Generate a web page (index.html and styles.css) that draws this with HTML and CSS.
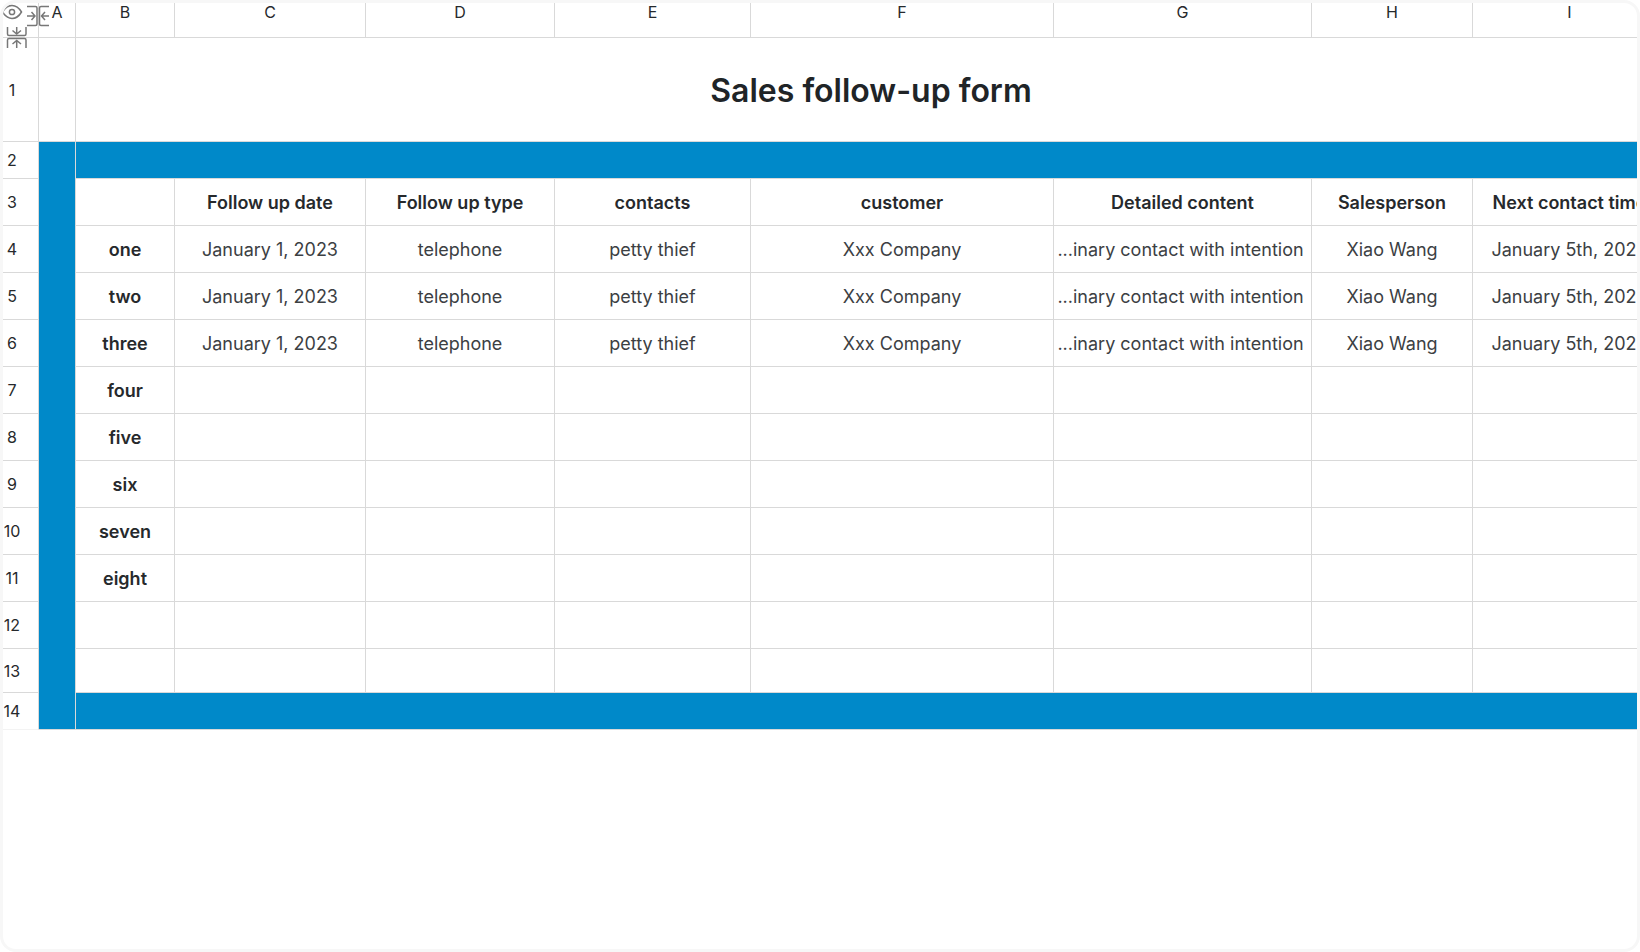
FILE: index.html
```html
<!DOCTYPE html>
<html lang="en">
<head>
    <meta charset="UTF-8">
    <meta name="viewport" content="width=device-width, initial-scale=1.0">
    <title>Sales follow-up form</title>
    <link rel="stylesheet" href="styles.css">
</head>
<body>
    <main class="sheet">
        <table class="grid">
            <colgroup>
                <col class="col-num">
                <col class="col-a">
                <col class="col-b">
                <col class="col-c">
                <col class="col-d">
                <col class="col-e">
                <col class="col-f">
                <col class="col-g">
                <col class="col-h">
                <col class="col-i">
            </colgroup>

            <!-- Column letters -->
            <thead>
                <tr class="letters">
                    <td class="corner">
                        <button class="tool eye" type="button" aria-label="Show hidden">
                            <svg width="22" height="18" viewBox="0 0 22 18">
                                <path d="M1.5 9C4 4.800 7 2.500 11 2.500S18 4.800 20.500 9C18 13.200 15 15.500 11 15.500S4 13.200 1.500 9Z"/>
                                <circle cx="11" cy="9" r="2.600"/>
                            </svg>
                        </button>
                        <button class="tool fold-cols" type="button" aria-label="Collapse columns">
                            <svg width="24" height="22" viewBox="0 0 24 22">
                                <path d="M1 1.500H9.500Q11 1.500 11 3V19Q11 20.500 9.500 20.500H1M23 1.500H15Q13.500 1.500 13.500 3V19Q13.500 20.500 15 20.500H23"/>
                                <path d="M1 11H9M5.500 7L9 11L5.500 15M23 11H15.500M19 7L15.500 11L19 15"/>
                            </svg>
                        </button>
                        <button class="tool fold-rows" type="button" aria-label="Collapse rows">
                            <svg width="22" height="24" viewBox="0 0 22 24">
                                <path d="M1.500 2V9Q1.500 10.500 3 10.500H18.500Q20 10.500 20 9V2M1.500 23V15Q1.500 13.500 3 13.500H18.500Q20 13.500 20 15V23"/>
                                <path d="M10.700 2V9M6.500 5.500L10.700 9L15 5.500M10.700 23V15.500M6.500 19L10.700 15.500L15 19"/>
                            </svg>
                        </button>
                    </td>
                    <th scope="col">A</th>
                    <th scope="col">B</th>
                    <th scope="col">C</th>
                    <th scope="col">D</th>
                    <th scope="col">E</th>
                    <th scope="col">F</th>
                    <th scope="col">G</th>
                    <th scope="col">H</th>
                    <th scope="col">I</th>
                </tr>
            </thead>

            <tbody>
                <tr class="title-row">
                    <th class="num" scope="row">1</th>
                    <td></td>
                    <td colspan="8"><h1>Sales follow-up form</h1></td>
                </tr>
                <tr class="band">
                    <th class="num" scope="row">2</th>
                    <td class="blue side" rowspan="13"></td>
                    <td class="blue" colspan="8"></td>
                </tr>
                <tr class="heads">
                    <th class="num" scope="row">3</th>
                    <td></td>
                    <th>Follow up date</th>
                    <th>Follow up type</th>
                    <th>contacts</th>
                    <th>customer</th>
                    <th>Detailed content</th>
                    <th>Salesperson</th>
                    <th>Next contact time</th>
                </tr>
                <tr>
                    <th class="num" scope="row">4</th>
                    <th>one</th>
                    <td>January 1, 2023</td>
                    <td>telephone</td>
                    <td>petty thief</td>
                    <td>Xxx Company</td>
                    <td class="long">...inary contact with intention</td>
                    <td>Xiao Wang</td>
                    <td>January 5th, 2023</td>
                </tr>
                <tr>
                    <th class="num" scope="row">5</th>
                    <th>two</th>
                    <td>January 1, 2023</td>
                    <td>telephone</td>
                    <td>petty thief</td>
                    <td>Xxx Company</td>
                    <td class="long">...inary contact with intention</td>
                    <td>Xiao Wang</td>
                    <td>January 5th, 2023</td>
                </tr>
                <tr>
                    <th class="num" scope="row">6</th>
                    <th>three</th>
                    <td>January 1, 2023</td>
                    <td>telephone</td>
                    <td>petty thief</td>
                    <td>Xxx Company</td>
                    <td class="long">...inary contact with intention</td>
                    <td>Xiao Wang</td>
                    <td>January 5th, 2023</td>
                </tr>
                <tr>
                    <th class="num" scope="row">7</th>
                    <th>four</th>
                    <td></td><td></td><td></td><td></td><td></td><td></td><td></td>
                </tr>
                <tr>
                    <th class="num" scope="row">8</th>
                    <th>five</th>
                    <td></td><td></td><td></td><td></td><td></td><td></td><td></td>
                </tr>
                <tr>
                    <th class="num" scope="row">9</th>
                    <th>six</th>
                    <td></td><td></td><td></td><td></td><td></td><td></td><td></td>
                </tr>
                <tr>
                    <th class="num" scope="row">10</th>
                    <th>seven</th>
                    <td></td><td></td><td></td><td></td><td></td><td></td><td></td>
                </tr>
                <tr>
                    <th class="num" scope="row">11</th>
                    <th>eight</th>
                    <td></td><td></td><td></td><td></td><td></td><td></td><td></td>
                </tr>
                <tr>
                    <th class="num" scope="row">12</th>
                    <td></td>
                    <td></td><td></td><td></td><td></td><td></td><td></td><td></td>
                </tr>
                <tr class="short">
                    <th class="num" scope="row">13</th>
                    <td></td>
                    <td></td><td></td><td></td><td></td><td></td><td></td><td></td>
                </tr>
                <tr class="band last">
                    <th class="num" scope="row">14</th>
                    <td class="blue" colspan="8"></td>
                </tr>
            </tbody>
        </table>
    </main>
</body>
</html>
```
FILE: styles.css
```css
* {
    box-sizing: border-box;
}

body {
    margin: 0;
    font-family: Inter, "Liberation Sans", sans-serif;
    font-size: 18px;
    color: #3c4043;
    background: #fff;
}

/* Rounded frame, the table runs off its right edge */
.sheet {
    min-height: 100vh;
    border: 3px solid #f7f7f7;
    border-radius: 16px;
    overflow: hidden;
    background: #fff;
}

.grid {
    table-layout: fixed;
    width: 1664px;
    border-collapse: separate;
    border-spacing: 0;
}

/* Column widths */
.col-num { width: 36px; }
.col-a { width: 37px; }
.col-b { width: 99px; }
.col-c { width: 191px; }
.col-d { width: 189px; }
.col-e { width: 196px; }
.col-f { width: 303px; }
.col-g { width: 258px; }
.col-h { width: 161px; }
.col-i { width: 194px; }

/* Cells */
td,
th {
    height: 47px;
    padding: 2px 0 0;
    border-right: 1px solid #d9d9d9;
    border-bottom: 1px solid #d9d9d9;
    line-height: 24px;
    text-align: center;
    vertical-align: middle;
    white-space: nowrap;
}

th {
    font-weight: 600;
    color: #26292c;
}

.long {
    padding-right: 4px;
}

/* Letters and row numbers */
.letters th,
.letters td {
    height: 35px;
    padding: 0;
    vertical-align: top;
}

.letters th,
.num {
    font-size: 16px;
    font-weight: 400;
    line-height: 18px;
}

.num {
    padding: 0 17px 0 0;
}

/* Title */
.title-row td,
.title-row th {
    height: 104px;
}

h1 {
    margin: 0;
    font-size: 32px;
    font-weight: 600;
    line-height: 40px;
    color: #202427;
}

/* Blue bands */
.band td,
.band th {
    height: 37px;
}

.last th {
    border-bottom-color: #f3f3f3;
}

.short td,
.short th {
    height: 44px;
}

.blue {
    background: #0089c9;
    background-clip: padding-box;
}

/* Corner tools */
.corner {
    position: relative;
}

.tool {
    position: absolute;
    padding: 0;
    border: 0;
    background: none;
    line-height: 0;
}

.tool svg {
    fill: none;
    stroke: #777;
    stroke-width: 1.5;
}

.eye {
    top: 0;
    left: -2px;
}

.fold-cols {
    top: 2px;
    left: 23px;
}

.fold-rows {
    top: 22px;
    left: 3px;
}
```
